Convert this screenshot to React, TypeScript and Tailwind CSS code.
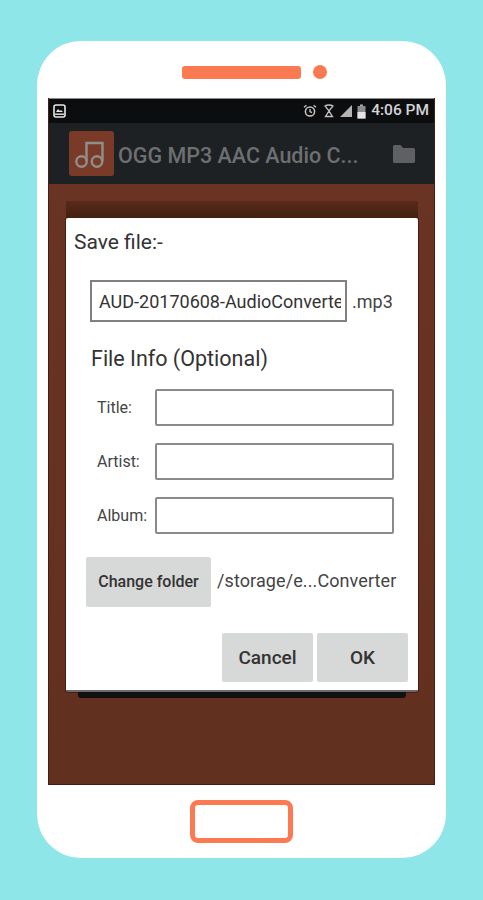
export default function App() {
  const font = { fontFamily: 'Roboto, "Liberation Sans", sans-serif' };
  const rows = ["Title:", "Artist:", "Album:"];
  return (
    <div className="w-[483px] h-[900px] bg-[#8fe6e8] pt-[41px] pl-[37px] overflow-hidden" style={font}>
      <div className="w-[409px] h-[817px] bg-white rounded-[44px] flex flex-col items-center">
        <div className="h-[57px] shrink-0 flex items-center gap-[12px] pt-[5px] pl-[26px]">
          <div className="w-[119px] h-[13px] rounded-[3px] bg-[#fc7a52]" />
          <div className="w-[14px] h-[14px] rounded-full bg-[#fc7a52]" />
        </div>
        <div className="w-[387px] h-[687px] shrink-0 bg-linear-to-b from-[#6b3424] to-[#62301f] flex flex-col border-x border-b border-[#4a1c10]">
          <div className="h-[25px] shrink-0 bg-[#0c0d0f] flex items-center justify-between pl-[4px] pr-[5px] border-t border-[#8a8a8a]">
            <svg width="13" height="14" viewBox="0 0 13 14">
              <rect x="1" y="1" width="11" height="12" rx="2" fill="none" stroke="#e8e8e8" strokeWidth="1.6" />
              <path d="M3 8l2-3 2 2 1-1 2 2z" fill="#e8e8e8" />
              <rect x="2" y="9.5" width="9" height="1.4" fill="#e8e8e8" />
            </svg>
            <div className="flex items-center">
              <svg width="14" height="14" viewBox="0 0 14 14" className="mr-[7px]">
                <circle cx="7" cy="7.5" r="4.6" fill="none" stroke="#c8c8c8" strokeWidth="1.5" />
                <path d="M7 5v2.6l2 1M1 3.2l2.4-2M13 3.2l-2.4-2" fill="none" stroke="#c8c8c8" strokeWidth="1.3" />
              </svg>
              <svg width="10" height="14" viewBox="0 0 10 14" className="mr-[5px]">
                <path d="M1 2c2-1.4 6-1.4 8 0L5 7zM5 7l-3.4 5.5h6.8z" fill="none" stroke="#c0c0c0" strokeWidth="1.4" />
              </svg>
              <svg width="14" height="14" viewBox="0 0 14 14" className="mr-[4px]">
                <path d="M1 13L13 1v12z" fill="#b4b4b4" />
              </svg>
              <svg width="9" height="15" viewBox="0 0 9 15" className="mr-[5px]">
                <rect x="3" y="0.5" width="3" height="2" fill="#aaa" />
                <rect x="0.5" y="2" width="8" height="12.5" fill="#8c8c8c" />
                <rect x="0.5" y="8" width="8" height="6.5" fill="#e4e4e4" />
              </svg>
              <span className="text-[15.5px] leading-none text-[#d4d4d4] font-medium">4:06 PM</span>
            </div>
          </div>
          <div className="h-[61px] shrink-0 bg-[#1d2124] flex items-center pl-[20px] pr-[18px]">
            <div className="w-[45px] h-[45px] shrink-0 rounded-[3px] bg-[#7a3a28] flex items-center justify-center">
              <svg width="34" height="34" viewBox="0 0 34 34" fill="none" stroke="#8f8f8c" strokeWidth="2.4">
                <circle cx="6.5" cy="24.5" r="5.2" />
                <circle cx="22" cy="24.5" r="5.2" />
                <path d="M11.5 24V6h16v18" />
              </svg>
            </div>
            <span className="ml-[4px] pt-[5px] flex-1 text-[21.5px] font-medium text-[#6e6f70] whitespace-nowrap">OGG MP3 AAC Audio C...</span>
            <svg width="24" height="22" viewBox="0 0 24 22">
              <path d="M1 3.5a1.5 1.5 0 0 1 1.5-1.5h6l2.5 3h10.5a1.5 1.5 0 0 1 1.5 1.5v12a1.5 1.5 0 0 1-1.5 1.5h-19a1.5 1.5 0 0 1-1.5-1.5z" fill="#5e6061" />
            </svg>
          </div>
          <div className="flex-1 flex flex-col pl-[17px] pr-[16px] pt-[17px]">
            <div className="h-[17px] shrink-0 bg-linear-to-b from-[#5a2b1b] to-[#40200f]" />
            <div className="h-[474px] shrink-0 bg-white rounded-[2px] flex flex-col text-[#2e2e2e] border-b-2 border-[#6b6b6b] shadow-[0_0_0_1px_#4a1f12]">
              <div className="pl-[8px] pt-[12px] text-[21px] leading-[24px] text-[#333]">Save file:-</div>
              <div className="flex items-center mt-[26px] ml-[24px]">
                <div className="w-[257px] h-[42px] border-2 border-[#808080] flex items-center pl-[7px] pt-[1px] overflow-hidden whitespace-nowrap text-[18px] text-[#333]">
                  <span className="block w-[242px] overflow-hidden">AUD-20170608-AudioConverter</span>
                </div>
                <span className="ml-[5px] text-[18px] text-[#444]">.mp3</span>
              </div>
              <div className="ml-[25px] mt-[25px] text-[21.5px] leading-[24px] text-[#333]">File Info (Optional)</div>
              <div className="flex flex-col gap-[17px] mt-[18px]">
                {rows.map((r) => (
                  <div key={r} className="flex items-center h-[37px]">
                    <span className="w-[89px] pl-[31px] pt-[1px] text-[16px] text-[#444] shrink-0">{r}</span>
                    <div className="w-[239px] h-[37px] border-2 border-[#8a8a8a] rounded-[2px]" />
                  </div>
                ))}
              </div>
              <div className="flex items-center mt-[23px] ml-[20px]">
                <div className="w-[125px] h-[50px] bg-[#d7d8d8] rounded-[2px] flex items-center justify-center text-[16px] font-medium text-[#333] whitespace-nowrap">Change folder</div>
                <span className="ml-[6px] pb-[3px] text-[18px] text-[#444] whitespace-nowrap tracking-[0.1px]">/storage/e...Converter</span>
              </div>
              <div className="flex justify-end gap-[4px] mt-[26px] pr-[10px]">
                <div className="w-[91px] h-[49px] bg-[#d7d8d8] rounded-[2px] pt-[2px] flex items-center justify-center text-[19px] font-medium text-[#333]">Cancel</div>
                <div className="w-[91px] h-[49px] bg-[#d7d8d8] rounded-[2px] pt-[2px] flex items-center justify-center text-[19px] font-medium text-[#333]">OK</div>
              </div>
            </div>
            <div className="h-[6px] shrink-0 mx-[12px] bg-[#111] rounded-b-[3px]" />
          </div>
        </div>
        <div className="flex-1 flex items-start pt-[15px]">
          <div className="w-[103px] h-[43px] rounded-[8px] border-[5px] border-[#fc7a52]" />
        </div>
      </div>
    </div>
  );
}
